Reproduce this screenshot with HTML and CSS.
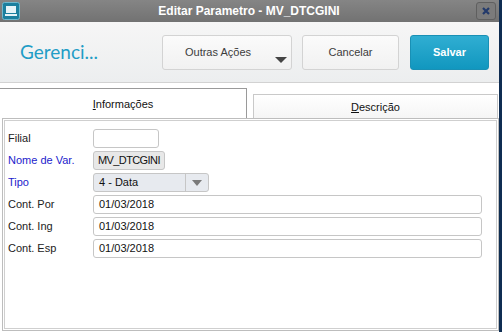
FILE: index.html
```html
<!DOCTYPE html>
<html lang="pt">
<head>
	<meta charset="utf-8">
	<title>Editar Parametro</title>
	<link rel="stylesheet" href="styles.css">
</head>
<body>
	<div class="win">
		<div class="titlebar">
			<span class="app-icon">
				<svg width="18" height="18" viewBox="0 0 18 18">
					<rect x="0.5" y="0.5" width="17" height="17" rx="2" fill="#1c7f9e" stroke="#6fb7cc"/>
					<rect x="4" y="4" width="10" height="7" fill="#e6f3f7"/>
					<rect x="3" y="12" width="12" height="2" fill="#e6f3f7"/>
				</svg>
			</span>
			<span class="title">Editar Parametro - MV_DTCGINI</span>
			<span class="close">
				<svg width="8" height="8" viewBox="0 0 8 8">
					<path d="M1 1 L7 7 M7 1 L1 7" stroke="#233a6b" stroke-width="2.2"/>
				</svg>
			</span>
		</div>
		<div class="toolbar">
			<div class="brand">Gerenci...</div>
			<button class="btn btn-more">Outras Ações<i class="caret"></i></button>
			<button class="btn btn-cancel">Cancelar</button>
			<button class="btn btn-save">Salvar</button>
		</div>
		<div class="content">
			<div class="tabs">
				<div class="tab active"><u>I</u>nformações</div>
				<div class="tab"><u>D</u>escrição</div>
			</div>
			<div class="panel">
				<div class="form">
					<label>Filial</label>
					<div><span class="field f-small"></span></div>
					<label class="req">Nome de Var.</label>
					<div><span class="field f-name">MV_DTCGINI</span></div>
					<label class="req">Tipo</label>
					<div><span class="field f-select"><span class="val">4 - Data</span><span class="arr"></span></span></div>
					<label>Cont. Por</label>
					<div><span class="field f-wide">01/03/2018</span></div>
					<label>Cont. Ing</label>
					<div><span class="field f-wide">01/03/2018</span></div>
					<label>Cont. Esp</label>
					<div><span class="field f-wide">01/03/2018</span></div>
				</div>
			</div>
		</div>
	</div>
</body>
</html>
```

FILE: styles.css
```css
*{
	margin:0;
	padding:0;
	box-sizing:border-box;
}
body{
	width:502px;
	height:332px;
	overflow:hidden;
	background:#0f2d52;
	font-family:"Liberation Sans",Arial,sans-serif;
	font-size:11px;
	color:#1a1a1a;
}
.win{
	width:499px;
	height:332px;
	display:flex;
	flex-direction:column;
	background:#fff;
}
.titlebar{
	height:22px;
	display:flex;
	align-items:center;
	padding:0 3px 0 2px;
	background:linear-gradient(#858585,#727272);
}
.app-icon{
	width:18px;
	height:18px;
	display:flex;
}
.title{
	flex:1;
	text-align:center;
	color:#fff;
	font-weight:bold;
	font-size:12px;
	padding-left:2px;
}
.close{
	width:20px;
	height:18px;
	border:1px solid #5f5f5f;
	border-radius:3px;
	background:#7b7b7b;
	display:flex;
	align-items:center;
	justify-content:center;
}
.toolbar{
	height:61px;
	display:flex;
	align-items:center;
	padding:0 10px 0 20px;
	background:linear-gradient(#f6f6f6,#eceeef);
	border-bottom:1px solid #d2d2d2;
}
.brand{
	flex:1;
	color:#1f9dc6;
	font-family:Lato,"Liberation Sans",sans-serif;
	font-size:19px;
	padding-bottom:2px;
}
.btn{
	height:35px;
	border:1px solid #d3d3d3;
	border-radius:3px;
	background:linear-gradient(#fbfbfb,#f1f1f1);
	font-family:"Liberation Sans",Arial,sans-serif;
	font-size:11px;
	color:#3c3c3c;
	position:relative;
}
.btn-more{
	width:130px;
	padding-right:18px;
	margin-right:10px;
}
.caret{
	position:absolute;
	right:4px;
	top:21px;
	border-left:6px solid transparent;
	border-right:6px solid transparent;
	border-top:6px solid #444;
}
.btn-cancel{
	width:97px;
	margin-right:11px;
}
.btn-save{
	width:79px;
	border-color:#1990b5;
	background:linear-gradient(#30aed2,#1197bf);
	color:#fff;
	font-weight:bold;
}
.content{
	flex:1;
	display:flex;
	flex-direction:column;
	padding-top:5px;
}
.tabs{
	display:flex;
	align-items:flex-end;
	gap:6px;
	height:30px;
}
.tab{
	width:245px;
	height:24px;
	border:1px solid #c9c9c9;
	border-bottom:none;
	background:linear-gradient(#fff,#f5f5f5);
	text-align:center;
	line-height:23px;
	padding-top:1px;
	color:#111;
}
.tab.active{
	width:247px;
	height:30px;
	border:1px solid #9a9a9a;
	border-left:none;
	border-bottom:none;
	background:#fff;
	line-height:30px;
	padding-top:0;
}
.panel{
	flex:1;
	margin:0 0 1px 2px;
	border:1px solid #bdbdbd;
	box-shadow:inset 0 0 0 1px #fff,inset 0 0 0 2px #cfcfcf;
	padding:10px 16px 0 5px;
}
.form{
	display:grid;
	grid-template-columns:85px 1fr;
	row-gap:3px;
}
.form label{
	height:19px;
	line-height:19px;
	color:#222;
}
.form label.req{
	color:#2222cc;
}
.field{
	display:block;
	height:19px;
	border:1px solid #c6c6c6;
	border-radius:3px;
	line-height:17px;
	padding-left:5px;
	color:#111;
	background:#fff;
	white-space:nowrap;
	overflow:hidden;
}
.f-small{
	width:66px;
}
.f-name{
	width:72px;
	background:#e8e8e8;
	padding-left:4px;
	letter-spacing:-0.6px;
}
.f-select{
	width:116px;
	display:flex;
	background:#e7eaef;
	padding-left:0;
}
.f-select .val{
	flex:1;
	padding-left:5px;
	border-right:1px solid #c6c6c6;
}
.f-select .arr{
	width:22px;
	position:relative;
}
.f-select .arr:after{
	content:"";
	position:absolute;
	left:6px;
	top:6px;
	border-left:5px solid transparent;
	border-right:5px solid transparent;
	border-top:6px solid #7a7a7a;
}
.f-wide{
	width:389px;
}
```
